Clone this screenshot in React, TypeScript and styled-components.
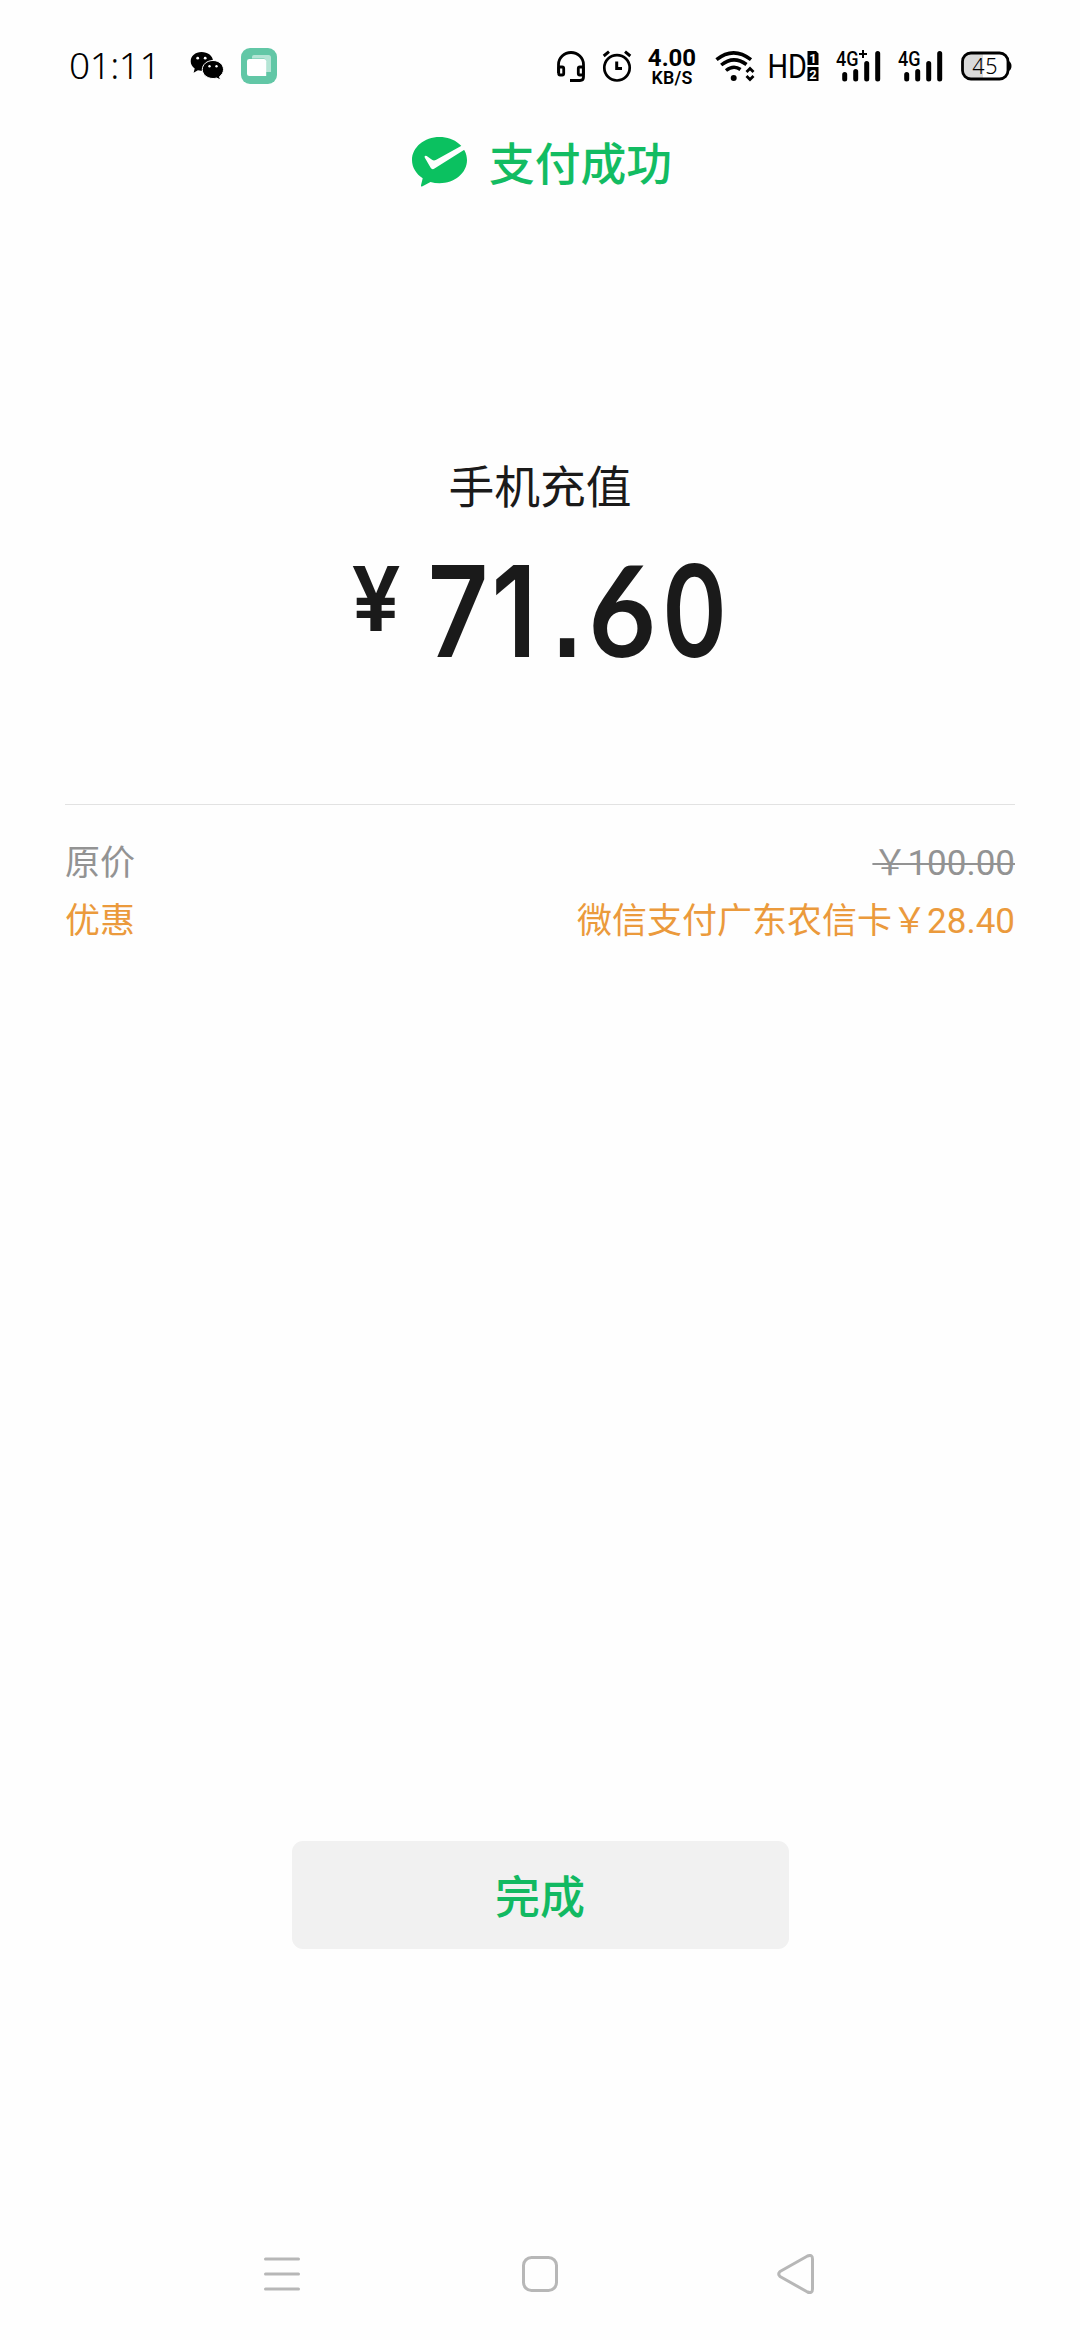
import React from "react";
import styled, { createGlobalStyle } from "styled-components";

const GlobalStyle = createGlobalStyle`
  * { box-sizing: border-box; }
  body {
    margin: 0;
    background: #fefefe;
    font-family: Roboto, "Noto Sans CJK SC", sans-serif;
  }
`;

const Screen = styled.main`
  display: flex;
  flex-direction: column;
  width: 1080px;
  height: 2340px;
  overflow: hidden;
  background: #fefefe;
`;

const StatusBar = styled.header`
  display: flex;
  align-items: center;
  justify-content: space-between;
  height: 132px;
  padding: 0 68px 0 69px;
  color: #000;
`;

const StatusGroup = styled.div`
  display: flex;
  align-items: center;
`;

const Clock = styled.span`
  width: 92px;
  padding-bottom: 2px;
  font: 350 37px/44px "Noto Sans", sans-serif;
  letter-spacing: -0.5px;
  white-space: nowrap;
`;

const StatusIcon = styled.svg<{ $before?: number }>`
  display: block;
  flex: none;
  overflow: visible;
  margin-left: ${(p) => p.$before ?? 0}px;
`;

const Speed = styled.div`
  display: flex;
  flex-direction: column;
  align-items: center;
  width: 50px;
  margin-left: 15px;
`;

const SpeedValue = styled.span`
  font: 700 24px/22px Roboto, sans-serif;
`;

const SpeedUnit = styled.span`
  font: 600 17.8px/15px Roboto, sans-serif;
  letter-spacing: 0.2px;
  margin-top: 1px;
`;

const PayHeader = styled.section`
  display: flex;
  align-items: center;
  justify-content: center;
  gap: 21px;
  height: 60px;
  padding-left: 4px;
  color: #12bc62;
`;

const PayStatus = styled.h1`
  margin: 0;
  padding-bottom: 2px;
  font: 500 45.8px/58px "Noto Sans CJK SC", sans-serif;
`;

const Summary = styled.section`
  display: flex;
  flex-direction: column;
  align-items: center;
  height: 612px;
  padding-top: 258px;
  color: #1a1a1a;
`;

const Product = styled.h2`
  margin: 0;
  font: 400 45.8px/68px "Noto Sans CJK SC", sans-serif;
`;

const Amount = styled.div`
  display: flex;
  align-items: baseline;
  width: 374px;
  height: 96px;
  margin-top: 42px;
`;

const Glyph = styled.span<{ $width: number; $before?: number; $stretch?: number; $font?: string; $weight?: number }>`
  display: flex;
  flex: none;
  justify-content: center;
  width: ${(p) => p.$width}px;
  margin-left: ${(p) => p.$before ?? 0}px;
  font-family: "${(p) => p.$font ?? "Inter"}", sans-serif;
  font-weight: ${(p) => p.$weight ?? 600};
  font-size: 127px;
  line-height: 96px;
  transform: scaleX(${(p) => p.$stretch ?? 1});
`;

const Yen = styled(Glyph)`
  align-self: flex-start;
  font-size: 90px;
  line-height: 78px;
`;

const Details = styled.dl`
  display: flex;
  flex-direction: column;
  height: 1037px;
  margin: 0 65px;
  padding-top: 30px;
  border-top: 1px solid #e2e2e2;
`;

const DetailRow = styled.div<{ $highlight?: boolean }>`
  display: flex;
  justify-content: space-between;
  height: 58px;
  font-size: 35px;
  line-height: 58px;
  color: ${(p) => (p.$highlight ? "#eb9a3c" : "#939393")};
`;

const Label = styled.dt``;

const Value = styled.dd<{ $struck?: boolean }>`
  margin: 0;
  text-decoration: ${(p) => (p.$struck ? "line-through" : "none")};
  text-decoration-thickness: 2px;
`;

const DoneButton = styled.button`
  align-self: center;
  width: 497px;
  height: 108px;
  padding: 0;
  border: 0;
  border-radius: 11px;
  background: #f1f1f1;
  color: #12b962;
  font: 500 45px/108px "Noto Sans CJK SC", sans-serif;
`;

const NavBar = styled.nav`
  display: flex;
  align-items: center;
  justify-content: space-between;
  height: 132px;
  margin-top: auto;
  padding: 0 265px 0 263px;
`;

const NavIcon = styled.svg`
  display: block;
  fill: none;
  stroke: #b7b7b7;
  stroke-width: 3;
  stroke-linecap: round;
  stroke-linejoin: round;
`;

const WeChatIcon = () => (
  <StatusIcon $before={29} width="34" height="30" viewBox="0 0 34 30">
    <path d="M11.5 1C5.3 1 .7 5 .7 10.200c0 3 1.500 5.400 4 7.200L3.600 21.800l4.300-2.500c1.300.3 2.500.5 3.600.4C17.800 19.600 23 15.500 23 10.200S17.800 1 11.500 1Z" />
    <path d="M23 9.500c-6 0-10.700 4-10.700 9s4.700 9 10.700 9c1.300 0 2.500-.1 3.600-.5l3.900 2-1-3.400c2.400-1.700 4-4.200 4-7.100 0-5-4.500-9-10.500-9Z" stroke="#fff" strokeWidth="1" />
    <g fill="#fff">
      <circle cx="7.700" cy="7.200" r="1.400" /><circle cx="15.200" cy="7.200" r="1.400" />
      <circle cx="19.500" cy="15.300" r="1.200" /><circle cx="26.500" cy="15.300" r="1.200" />
    </g>
  </StatusIcon>
);

const CardsIcon = () => (
  <StatusIcon $before={17} width="36" height="36" viewBox="0 0 36 36">
    <rect width="36" height="36" rx="9" fill="#62c7a6" />
    <path d="M13 7h14.500q2.500 0 2.500 2.500V24h-5V13q0-2.500-2.500-2.500H11V9q0-2 2-2Z" fill="#b4e5d5" />
    <path d="M8.500 11H23q2.200 0 2.200 2.200V28H8.500Q6 28 6 25.500V13q0-2 2.500-2Z" fill="#fff" />
  </StatusIcon>
);

const HeadsetIcon = () => (
  <StatusIcon width="28" height="31" viewBox="0 0 28 31" fill="none" stroke="#000" strokeWidth="2.800">
    <path d="M1.500 22V13.500a12.500 12 0 0 1 25 0V26q0 3.500-3.500 3.500H13" />
    <rect x="1.700" y="16" width="5" height="8" rx="1.500" />
    <rect x="21.300" y="16" width="5" height="8" rx="1.500" />
  </StatusIcon>
);

const AlarmIcon = () => (
  <StatusIcon $before={17} width="30" height="32" viewBox="0 0 30 32" fill="none" stroke="#000" strokeWidth="2.700">
    <circle cx="15" cy="17.800" r="12.700" />
    <path d="M14.700 11.500V18.500H20M1.700 6 7 1.700M28.300 6 23 1.700" strokeWidth="3" />
  </StatusIcon>
);

const WifiIcon = () => (
  <StatusIcon $before={18} width="40" height="32" viewBox="0 0 40 32" fill="none" stroke="#000" strokeWidth="3.500">
    <path d="M1.500 9.700Q18.500-4 36 9.700M6.200 15Q18.500 5 31.500 14.500M11 20.500Q18.500 14.500 25.500 19.500" />
    <circle cx="18.700" cy="28" r="3" fill="#000" stroke="none" />
    <path d="m31.500 22 3.500-3.500 3.500 3.500M31.500 26l3.500 3.500 3.500-3.500" strokeWidth="2.800" />
  </StatusIcon>
);

const HdIcon = () => (
  <StatusIcon $before={14} width="50" height="32" viewBox="0 0 50 32">
    <text x="-1.500" y="28" fontFamily="Roboto" fontSize="33.500" textLength="39.500" lengthAdjust="spacingAndGlyphs">HD</text>
    <path d="M38.500 1H47L49.500 3.500V15h-11ZM38.500 17h11v14h-11Z" />
    <text x="44" y="12.500" textAnchor="middle" fill="#fff" fontFamily="Roboto" fontWeight="700" fontSize="13">1</text>
    <text x="44" y="28.500" textAnchor="middle" fill="#fff" fontFamily="Roboto" fontWeight="700" fontSize="13">2</text>
  </StatusIcon>
);

const SignalIcon = ({ before, plus }: { before: number; plus?: boolean }) => (
  <StatusIcon $before={before} width="46" height="32" viewBox="0 0 46 32">
    <text x="0" y="16" fontFamily="Roboto" fontWeight="500" fontSize="20.500" textLength="22.500" lengthAdjust="spacingAndGlyphs">4G</text>
    {plus && <path d="M23 4h8M27 0v8" stroke="#000" strokeWidth="2" />}
    <path d="M8.700 24.500v4.500M19.700 21.500v7.500M30.700 13.500v15.500M41.700 3.500v25.500" stroke="#000" strokeWidth="5" strokeLinecap="round" />
  </StatusIcon>
);

const BatteryIcon = () => (
  <StatusIcon $before={17} width="51" height="30" viewBox="0 0 51 30">
    <path d="M10 2h12v26H10q-8 0-8-8V10q0-8 8-8Z" fill="#dadada" />
    <rect x="1.500" y="2" width="45.500" height="26" rx="8.500" fill="none" stroke="#000" strokeWidth="2.800" />
    <path d="M47 9.500q3.500 1.500 3.500 5.500T47 20.500Z" />
    <text x="24.300" y="22.500" textAnchor="middle" fontFamily="Noto Sans" fontWeight="350" fontSize="21.500" letterSpacing="0.8">45</text>
  </StatusIcon>
);

const PayIcon = () => (
  <StatusIcon width="56" height="50" viewBox="0 0 56 50">
    <path d="M27.500 0C12.300 0 0 10.300 0 23c0 7.500 4.200 14 10.700 18.300L9 48.300q-.3 1.900 1.500 1L18.500 45c2.800.8 5.800 1.200 9 1.200C42.700 46.200 55 36 55 23S42.700 0 27.500 0Z" fill="#0bc160" />
    <path d="M12.700 20.500q-.7-2.600 2-1.500l5.300 3.800q1.800 1.200 3.800.2L49.500 8.800 53.500 12 22.500 31.600q-2.500 1.500-4-1Z" fill="#fefefe" />
  </StatusIcon>
);

export default function App() {
  return (
    <>
      <GlobalStyle />
      <Screen>
        <StatusBar>
          <StatusGroup>
            <Clock>01:11</Clock>
            <WeChatIcon />
            <CardsIcon />
          </StatusGroup>
          <StatusGroup>
            <HeadsetIcon />
            <AlarmIcon />
            <Speed>
              <SpeedValue>4.00</SpeedValue>
              <SpeedUnit>KB/S</SpeedUnit>
            </Speed>
            <WifiIcon />
            <HdIcon />
            <SignalIcon before={17} plus />
            <SignalIcon before={16} />
            <BatteryIcon />
          </StatusGroup>
        </StatusBar>
        <PayHeader>
          <PayIcon />
          <PayStatus>支付成功</PayStatus>
        </PayHeader>
        <Summary>
          <Product>手机充值</Product>
          <Amount>
            <Yen $width={46} $stretch={0.97}>¥</Yen>
            <Glyph $width={56} $before={31} $stretch={0.83}>7</Glyph>
            <Glyph $width={56} $stretch={0.85}>1</Glyph>
            <Glyph $width={50} $font="Liberation Sans" $weight={700} $stretch={0.8}>.</Glyph>
            <Glyph $width={60} $font="Lato" $weight={700} $stretch={0.91}>6</Glyph>
            <Glyph $width={57} $before={14} $stretch={0.77}>0</Glyph>
          </Amount>
        </Summary>
        <Details>
          <DetailRow>
            <Label>原价</Label>
            <Value $struck>￥100.00</Value>
          </DetailRow>
          <DetailRow $highlight>
            <Label>优惠</Label>
            <Value>微信支付广东农信卡￥28.40</Value>
          </DetailRow>
        </Details>
        <DoneButton type="button">完成</DoneButton>
        <NavBar>
          <NavIcon width="38" height="34" viewBox="0 0 38 34">
            <path d="M2.500 2h33M2.500 17h33M2.500 32h33" />
          </NavIcon>
          <NavIcon width="40" height="38" viewBox="0 0 40 38">
            <rect x="4.500" y="2.500" width="33" height="33" rx="8" />
          </NavIcon>
          <NavIcon width="38" height="40" viewBox="0 0 38 40">
            <path d="M3 17.500 30.500 2Q35.500 0 35.500 5V35Q35.500 40 30.500 38L3 22.500Q.5 20 3 17.500Z" />
          </NavIcon>
        </NavBar>
      </Screen>
    </>
  );
}
